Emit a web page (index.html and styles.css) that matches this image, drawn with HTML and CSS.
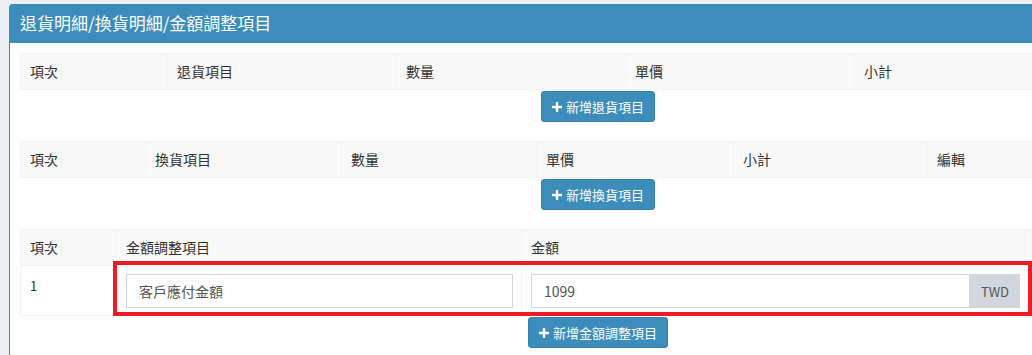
FILE: index.html
```html
<!DOCTYPE html>
<html lang="zh-Hant">
<head>
    <meta charset="UTF-8">
    <meta name="viewport" content="width=device-width, initial-scale=1.0">
    <title>退貨明細/換貨明細/金額調整項目</title>
    <link rel="stylesheet" href="styles.css">
</head>
<body>
    <div class="content">
        <div class="box">
            <div class="box-header">
                <h3 class="box-title">退貨明細/換貨明細/金額調整項目</h3>
            </div>
            <div class="box-body">

                <!-- 退貨明細 -->
                <div class="section">
                    <table class="item-table return-table">
                        <thead>
                            <tr>
                                <th>項次</th>
                                <th>退貨項目</th>
                                <th>數量</th>
                                <th>單價</th>
                                <th>小計</th>
                                <th></th>
                            </tr>
                        </thead>
                    </table>
                    <div class="actions">
                        <button type="button" class="btn">
                            <svg class="icon-plus" viewBox="0 0 10 10"><path d="M5 0V10M0 5H10"/></svg>新增退貨項目
                        </button>
                    </div>
                </div>

                <!-- 換貨明細 -->
                <div class="section">
                    <table class="item-table exchange-table">
                        <thead>
                            <tr>
                                <th>項次</th>
                                <th>換貨項目</th>
                                <th>數量</th>
                                <th>單價</th>
                                <th>小計</th>
                                <th>編輯</th>
                            </tr>
                        </thead>
                    </table>
                    <div class="actions">
                        <button type="button" class="btn">
                            <svg class="icon-plus" viewBox="0 0 10 10"><path d="M5 0V10M0 5H10"/></svg>新增換貨項目
                        </button>
                    </div>
                </div>

                <!-- 金額調整 -->
                <div class="section adjust-section">
                    <table class="item-table adjust-table">
                        <thead>
                            <tr>
                                <th>項次</th>
                                <th>金額調整項目</th>
                                <th>金額</th>
                                <th></th>
                            </tr>
                        </thead>
                        <tbody>
                            <tr>
                                <td>1</td>
                                <td><input type="text" class="form-control" value="客戶應付金額"></td>
                                <td>
                                    <div class="input-group">
                                        <input type="text" class="form-control" value="1099">
                                        <span class="addon">TWD</span>
                                    </div>
                                </td>
                                <td></td>
                            </tr>
                        </tbody>
                    </table>
                    <div class="highlight"></div>
                    <div class="actions">
                        <button type="button" class="btn">
                            <svg class="icon-plus" viewBox="0 0 10 10"><path d="M5 0V10M0 5H10"/></svg>新增金額調整項目
                        </button>
                    </div>
                </div>

            </div>
        </div>
    </div>
</body>
</html>
```

FILE: styles.css
```css
html, body {
    margin: 0;
    height: 100%;
    overflow: hidden;
}
body {
    background-color: #ecf0f5;
    font-family: "Noto Sans CJK TC", sans-serif;
    font-size: 14px;
    color: #333;
}
.content {
    padding: 4px 0 0 9px;
}
.box {
    width: 1178px;
    height: 400px;
    background-color: #fff;
    border: 1px solid #3c8dbc;
    border-radius: 3px;
    box-sizing: border-box;
}
.box-header {
    background-color: #3c8dbc;
    padding: 8px 10px 10px 10px;
    height: 38px;
    box-sizing: border-box;
}
.box-title {
    margin: 0;
    color: #fff;
    font-size: 17px;
    font-weight: normal;
    line-height: 20px;
}
.box-body {
    padding: 10px;
}
.section {
    position: relative;
    margin-bottom: 19px;
}
.item-table {
    width: 100%;
    border-collapse: collapse;
    table-layout: fixed;
}
.item-table th,
.item-table td {
    box-sizing: border-box;
    border: 1px solid #f4f4f4;
    padding: 8px 8px 8px 9px;
    line-height: 19px;
    text-align: left;
    vertical-align: top;
    white-space: nowrap;
}
.item-table th {
    background-color: #f9f9f9;
    font-weight: normal;
}
.return-table th:nth-child(1) { width: 147px; }
.return-table th:nth-child(2),
.return-table th:nth-child(3),
.return-table th:nth-child(4),
.return-table th:nth-child(5) { width: 229px; }

.exchange-table th:nth-child(1) { width: 125px; }
.exchange-table th:nth-child(2) { width: 196px; }
.exchange-table th:nth-child(3) { width: 195px; }
.exchange-table th:nth-child(4) { width: 197px; }
.exchange-table th:nth-child(5) { width: 194px; }

.adjust-table th:nth-child(1) { width: 96px; }
.adjust-table th:nth-child(2) { width: 405px; }
.adjust-table th:nth-child(3) { width: 503px; }

.adjust-table td {
    padding: 8px 8px 7px 9px;
}
.adjust-table td:first-child {
    padding-top: 10px;
    font-size: 13px;
}

.form-control {
    display: block;
    width: 100%;
    min-width: 0;
    height: 34px;
    box-sizing: border-box;
    padding: 6px 12px;
    border: 1px solid #d2d6de;
    border-radius: 0;
    font-family: "Noto Sans CJK TC", sans-serif;
    font-size: 14px;
    color: #555;
    background-color: #fff;
}
.input-group {
    display: flex;
    margin-right: -4px;
}
.input-group .form-control {
    flex: 1;
    width: auto;
}
.addon {
    width: 50px;
    flex: none;
    display: flex;
    align-items: center;
    justify-content: center;
    box-sizing: border-box;
    background-color: #d2d6de;
    border: 1px solid #d2d6de;
    color: #555;
    font-size: 13px;
}
.highlight {
    position: absolute;
    left: 93px;
    top: 32px;
    width: 919px;
    height: 55px;
    border: 4px solid #ed1c24;
    box-sizing: border-box;
}
.actions {
    display: flex;
    justify-content: center;
    padding-top: 1px;
}
.btn {
    display: inline-flex;
    align-items: center;
    height: 31px;
    padding: 0 10px;
    background-color: #3c8dbc;
    border: 1px solid #367fa9;
    border-radius: 3px;
    color: #fff;
    font-family: "Noto Sans CJK TC", sans-serif;
    font-size: 13px;
    cursor: pointer;
}
.icon-plus {
    width: 10px;
    height: 10px;
    margin-right: 4px;
    stroke: #fff;
    stroke-width: 2.4;
    fill: none;
}
```
